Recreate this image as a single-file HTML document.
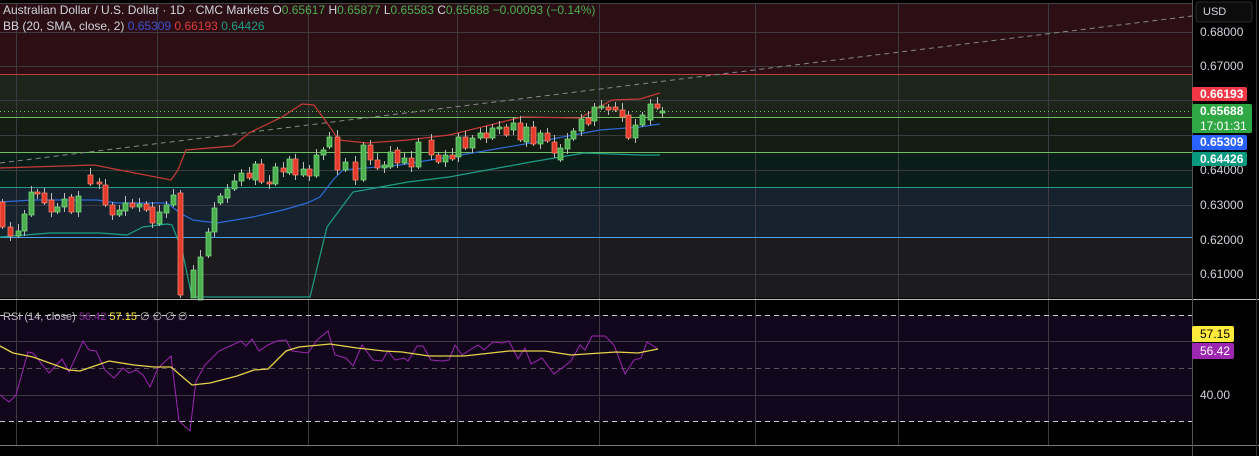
<!DOCTYPE html>
<html><head><meta charset="utf-8"><style>
html,body{margin:0;padding:0;background:#000;width:1259px;height:456px;overflow:hidden;font-family:"Liberation Sans",sans-serif}
svg{display:block}
</style></head><body>
<svg id="s" width="1259" height="456" xmlns="http://www.w3.org/2000/svg" font-family="Liberation Sans, sans-serif">
<rect x="0" y="0" width="1259" height="456" fill="#000"/>
<rect x="0" y="3" width="1192" height="71" fill="#2b0f15"/>
<rect x="0" y="74" width="1192" height="43" fill="#1d2419"/>
<rect x="0" y="117" width="1192" height="35" fill="#131c12"/>
<rect x="0" y="152" width="1192" height="35" fill="#0a1d19"/>
<rect x="0" y="187" width="1192" height="50" fill="#16232f"/>
<rect x="0" y="237" width="1192" height="61" fill="#1c1c1f"/>
<rect x="0" y="315" width="1192" height="106" fill="#12061c"/>
<g id="grid" stroke="#3a3a40" stroke-width="1"></g>
<line x1="0" y1="74.5" x2="1192" y2="74.5" stroke="#c23b42"/>
<line x1="0" y1="117.5" x2="1192" y2="117.5" stroke="#6fbf60"/>
<line x1="0" y1="152.5" x2="1192" y2="152.5" stroke="#6fbf60"/>
<line x1="0" y1="187.5" x2="1192" y2="187.5" stroke="#2a9d8a"/>
<line x1="0" y1="237.5" x2="1192" y2="237.5" stroke="#4aa3e0"/>
<line x1="0" y1="111.5" x2="1192" y2="111.5" stroke="#6fbf60" stroke-dasharray="1 3"/>
<line x1="0" y1="163" x2="1192" y2="16" stroke="#888" stroke-dasharray="5 4"/>
<g id="bb" fill="none" stroke-width="1.2"></g>
<g id="candles"></g>
<line x1="0" y1="315.5" x2="1192" y2="315.5" stroke="#ccc" stroke-dasharray="5 4"/>
<line x1="0" y1="368.5" x2="1192" y2="368.5" stroke="#555" stroke-dasharray="5 4"/>
<line x1="0" y1="421.5" x2="1192" y2="421.5" stroke="#ccc" stroke-dasharray="5 4"/>
<g id="rsi" fill="none"></g>
<line x1="0" y1="3.5" x2="1192" y2="3.5" stroke="#444"/>
<line x1="0" y1="299.5" x2="1259" y2="299.5" stroke="#bbb"/>
<line x1="0" y1="445.5" x2="1259" y2="445.5" stroke="#777"/>
<line x1="1192.5" y1="0" x2="1192.5" y2="456" stroke="#555"/>
<line x1="1256.5" y1="0" x2="1256.5" y2="456" stroke="#333"/>
<text x="3" y="14" font-size="12" fill="#d1d4dc">Australian Dollar / U.S. Dollar · 1D · CMC Markets <tspan>O</tspan><tspan fill="#4caf50">0.65617</tspan> H<tspan fill="#4caf50">0.65877</tspan> L<tspan fill="#4caf50">0.65583</tspan> C<tspan fill="#4caf50">0.65688</tspan> <tspan fill="#4caf50">−0.00093 (−0.14%)</tspan></text>
<text x="3" y="30" font-size="12" fill="#d1d4dc">BB (20, SMA, close, 2) <tspan fill="#3f51d0">0.65309</tspan> <tspan fill="#e03a3a">0.66193</tspan> <tspan fill="#1e9e86">0.64426</tspan></text>
<text x="3" y="320" font-size="11" fill="#bbb">RSI (14, close) <tspan fill="#8e2fa0">56.42</tspan> <tspan fill="#ffeb3b">57.15</tspan>  ∅ ∅ ∅ ∅</text>
<rect x="1196" y="2" width="56" height="20" rx="3" fill="#0c0c0c" stroke="#2a2a2a"/>
<text x="1203" y="15" font-size="11" fill="#d1d4dc">USD</text>
<g font-size="12" fill="#d1d4dc">
<text x="1200" y="36">0.68000</text>
<text x="1200" y="70">0.67000</text>
<text x="1200" y="174">0.64000</text>
<text x="1200" y="209">0.63000</text>
<text x="1200" y="244">0.62000</text>
<text x="1200" y="278">0.61000</text>
<text x="1200" y="399">40.00</text>
</g>
<rect x="1192" y="87" width="55" height="14" rx="2" fill="#f23645"/>
<text x="1200" y="98" font-size="12" font-weight="bold" fill="#fff">0.66193</text>
<rect x="1192" y="104" width="60" height="29" rx="2" fill="#2fa844"/>
<text x="1200" y="115" font-size="12" font-weight="bold" fill="#fff">0.65688</text>
<text x="1200" y="130" font-size="12" fill="#fff">17:01:31</text>
<rect x="1192" y="135" width="55" height="15" rx="2" fill="#2962ff"/>
<text x="1200" y="146" font-size="12" font-weight="bold" fill="#fff">0.65309</text>
<rect x="1192" y="152" width="55" height="14" rx="2" fill="#089981"/>
<text x="1200" y="163" font-size="12" font-weight="bold" fill="#fff">0.64426</text>
<rect x="1192" y="326" width="42" height="16" rx="2" fill="#ffeb3b"/>
<text x="1200" y="338" font-size="12" fill="#000">57.15</text>
<rect x="1192" y="343" width="42" height="16" rx="2" fill="#9c27b0"/>
<text x="1200" y="355" font-size="12" fill="#fff">56.42</text>
</svg>
<script>
var NS="http://www.w3.org/2000/svg";
function el(p,t,a){var e=document.createElementNS(NS,t);for(var k in a)e.setAttribute(k,a[k]);p.appendChild(e);return e;}
var g=document.getElementById('grid');
[16,157,308,457,599,755,898,1048].forEach(function(x){el(g,'line',{x1:x+.5,y1:4,x2:x+.5,y2:445});});
[32,66,100,135,170,205,274].forEach(function(y){el(g,'line',{x1:0,y1:y+.5,x2:1192,y2:y+.5});});
[341,395].forEach(function(y){el(g,'line',{x1:0,y1:y+.5,x2:1192,y2:y+.5});});
function pl(pts,c,p,w){el(p,'polyline',{points:pts.map(function(a){return a.join(',')}).join(' '),stroke:c,'stroke-width':w||1.2,fill:'none'});}
var bb=document.getElementById('bb');
pl([[0,168],[94,165],[135,173],[171,180],[178,170],[186,150],[233,146],[249,133],[282,117],[302,104],[314,105],[327,123],[339,140],[367,143],[408,140],[449,135],[490,125],[522,117],[580,118],[612,100],[640,99],[660,93]],'#c83a3a',bb);
pl([[0,202],[33,200],[97,200],[117,203],[167,203],[180,213],[193,220],[217,223],[253,217],[283,210],[307,203],[320,197],[333,180],[343,170],[400,165],[449,157],[531,143],[600,130],[640,127],[660,124]],'#2d6ad8',bb);
pl([[0,237],[50,233],[100,233],[127,235],[143,227],[167,224],[172,225],[182,250],[192,297],[310,297],[327,227],[347,200],[353,192],[408,182],[449,177],[531,162],[584,153],[640,155],[660,155]],'#1e9e86',bb);
var C=[[0,202,227,0],[8,227,236,0],[16,231,236,1],[22,214,231,1],[29,192,215,1],[35,192,194,0],[42,193,203,0],[49,200,212,0],[55,207,212,1],[62,199,207,1],[69,197,212,0],[76,196,212,1],[88,175,184,0],[97,182,184,0],[103,185,205,0],[110,205,215,0],[117,210,215,1],[123,203,211,1],[130,203,207,0],[137,204,207,1],[144,204,210,0],[150,207,223,0],[157,212,224,1],[164,205,213,1],[171,195,205,1],[178,193,295,0],[191,270,298,1],[198,257,300,1],[206,232,256,1],[212,208,232,1],[218,196,203,1],[225,189,198,1],[232,181,189,1],[239,173,181,1],[247,173,178,0],[253,164,180,1],[259,164,182,0],[267,182,184,0],[273,167,184,1],[281,168,172,0],[287,159,173,1],[293,159,175,0],[301,169,175,1],[307,169,176,0],[314,155,176,1],[321,150,155,1],[327,137,147,1],[335,137,170,0],[343,162,170,1],[353,162,180,0],[361,145,180,1],[368,145,160,0],[375,160,168,0],[382,165,168,1],[388,152,167,1],[395,150,163,0],[402,158,163,1],[409,158,167,0],[416,142,167,1],[429,140,155,0],[436,155,162,0],[443,155,162,1],[450,155,159,0],[456,137,157,1],[463,137,148,0],[470,138,148,1],[478,133,138,1],[484,133,138,0],[490,128,138,1],[497,127,129,1],[504,127,135,0],[511,123,130,1],[518,123,140,0],[524,127,142,1],[531,127,144,0],[538,133,144,1],[545,133,141,0],[552,142,153,0],[558,148,160,1],[565,139,149,1],[571,131,139,1],[579,119,131,1],[586,118,124,0],[592,107,121,1],[599,106,108,1],[606,107,110,0],[613,107,110,0],[620,110,117,0],[626,115,138,0],[633,125,138,1],[640,115,125,1],[648,104,120,1],[655,104,108,0],[660,111,113,1]];
var cg=document.getElementById('candles');
C.forEach(function(c,i){var col=c[3]?'#4caf50':'#e53b2c';var w=(i*7)%5+3;
el(cg,'line',{x1:c[0]+2.5,y1:c[1]-w,x2:c[0]+2.5,y2:Math.min(298,c[2]+((i*3)%6)+2),stroke:'#bbb','stroke-width':1});
el(cg,'rect',{x:c[0],y:c[1],width:5,height:Math.max(1.5,c[2]-c[1]),fill:col,stroke:c[3]?'#7fe07f':'#ff8a70','stroke-width':0.7});});
var r=document.getElementById('rsi');
pl([[0,395],[9,402],[16,395],[28,352],[33,353],[49,373],[62,359],[69,372],[83,341],[89,350],[96,351],[105,370],[114,378],[123,368],[129,373],[136,370],[143,375],[150,387],[158,368],[171,356],[179,421],[190,431],[196,381],[205,365],[219,351],[241,341],[246,346],[252,339],[259,351],[268,345],[277,341],[286,340],[292,351],[308,353],[317,340],[328,331],[335,355],[346,358],[353,366],[362,345],[373,360],[382,361],[388,351],[395,360],[404,358],[408,361],[417,346],[423,346],[431,360],[442,361],[449,360],[455,345],[462,355],[478,345],[484,350],[493,342],[502,343],[509,341],[518,359],[525,348],[531,364],[542,358],[554,374],[571,361],[580,345],[585,350],[592,336],[605,336],[614,345],[625,374],[634,360],[641,358],[647,342],[658,349]],'#9c27b0',r,1);
pl([[0,346],[13,353],[33,357],[69,370],[80,371],[109,361],[134,365],[154,367],[171,367],[192,385],[210,383],[237,376],[254,370],[268,369],[286,351],[299,347],[330,344],[357,348],[384,351],[402,352],[429,356],[464,356],[509,351],[545,351],[571,355],[616,352],[638,353],[658,349]],'#e8d44a',r,1.3);
</script>
</body></html>
